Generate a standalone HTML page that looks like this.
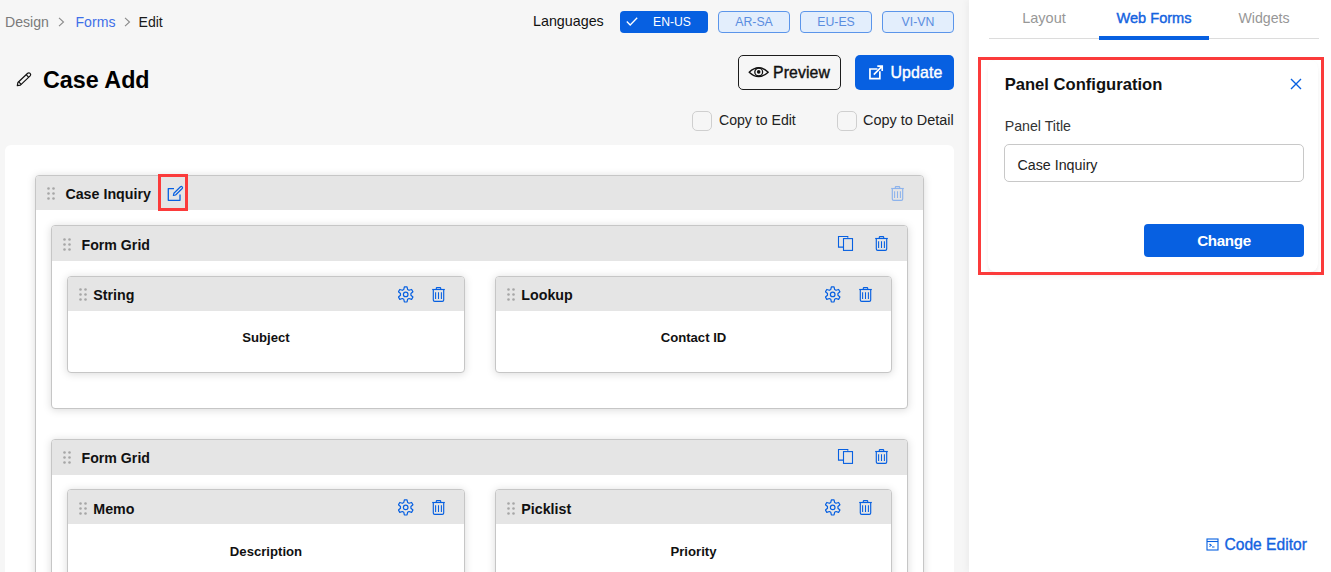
<!DOCTYPE html>
<html><head><meta charset="utf-8">
<style>
*{box-sizing:border-box;margin:0;padding:0}
html,body{width:1331px;height:572px;overflow:hidden;background:#f6f6f6;font-family:"Liberation Sans",sans-serif;color:#1a1a1a}
.a{position:absolute}
.t{position:absolute;white-space:nowrap;line-height:1}
.b{font-weight:bold}
.card{position:absolute;background:#fff;border-radius:6px}
.pnl{position:absolute;background:#fff;border:1px solid #c6c6c6;border-radius:4px;box-shadow:0 1px 8px rgba(0,0,0,.15);overflow:hidden}
.hdr{position:absolute;left:0;top:0;right:0;background:#e5e5e5}
.chip{position:absolute;top:11px;height:22px;border:1.5px solid #5b95ea;background:#e3eefc;border-radius:4px;color:#5a8de0;font-size:12.3px;text-align:center;line-height:20px}
</style></head>
<body>
<svg width="0" height="0" style="position:absolute">
<defs>
<symbol id="dots" viewBox="0 0 8 13"><circle cx="1.5" cy="1.5" r="1.3"/><circle cx="6.5" cy="1.5" r="1.3"/><circle cx="1.5" cy="6.5" r="1.3"/><circle cx="6.5" cy="6.5" r="1.3"/><circle cx="1.5" cy="11.5" r="1.3"/><circle cx="6.5" cy="11.5" r="1.3"/></symbol>
<symbol id="trash" viewBox="0 0 13 15"><g fill="none" stroke="currentColor" stroke-width="1.15" stroke-linejoin="round"><path d="M0.2 2.5 H12.8"/><path d="M4.3 2.3 V1.3 Q4.3 0.6 5 0.6 H8 Q8.7 0.6 8.7 1.3 V2.3"/><path d="M1.3 2.5 V13 Q1.3 14.4 2.7 14.4 H10.3 Q11.7 14.4 11.7 13 V2.5"/><path d="M3.6 5.2 V11.9 M6.5 5.2 V11.9 M9.4 5.2 V11.9" stroke-width="1.05"/></g></symbol>
<symbol id="gear" viewBox="0 0 16 17"><g fill="none" stroke="currentColor" stroke-width="1.2" stroke-linejoin="round"><path d="M5.80 3.45 L6.36 0.82 L9.04 0.82 L9.60 3.45 L11.04 4.28 L13.60 3.45 L14.94 5.77 L12.93 7.57 L12.93 9.23 L14.94 11.03 L13.60 13.35 L11.04 12.52 L9.60 13.35 L9.04 15.98 L6.36 15.98 L5.80 13.35 L4.36 12.52 L1.80 13.35 L0.46 11.03 L2.47 9.23 L2.47 7.57 L0.46 5.77 L1.80 3.45 L4.36 4.28 Z"/><circle cx="7.7" cy="8.4" r="2.3"/></g></symbol>
<symbol id="copy" viewBox="0 0 17 17"><g fill="none" stroke="currentColor" stroke-width="1.1"><path d="M10.8 2.7 V1.5 H1.5 V12.1 H6"/><rect x="6.5" y="3.6" width="9" height="11.8"/></g></symbol>
</defs></svg>
<div class="t" style="left:5px;top:15px;font-size:14.1px;color:#7a7a7a;">Design</div>
<svg class="a" style="left:58px;top:17px" width="7" height="10" viewBox="0 0 7 10"><path d="M1 0.8 L5.5 5 L1 9.2" fill="none" stroke="#8a8a8a" stroke-width="1.1"/></svg>
<div class="t" style="left:75.5px;top:15px;font-size:14.1px;color:#3f6fe8;">Forms</div>
<svg class="a" style="left:124px;top:17px" width="7" height="10" viewBox="0 0 7 10"><path d="M1 0.8 L5.5 5 L1 9.2" fill="none" stroke="#8a8a8a" stroke-width="1.1"/></svg>
<div class="t" style="left:138.5px;top:15px;font-size:14.1px;color:#1a1a1a;">Edit</div>
<svg class="a" style="left:12px;top:66px" width="24" height="26" viewBox="0 0 24 26"><g fill="none" stroke="#111" stroke-width="1.2" stroke-linejoin="round"><path d="M5.3 19.6 L5.9 16.5 L15.66 7.3 A1.8 1.8 0 0 1 18.14 9.9 L8.4 19.1 Z"/><path d="M14.2 8.7 L16.7 11.3 M6.6 15.7 L9.1 18.3"/></g></svg>
<div class="t b" style="left:43px;top:69px;font-size:23.3px;color:#000;">Case Add</div>
<div class="t" style="left:533px;top:14px;font-size:14.3px;color:#111;">Languages</div>
<div class="a" style="left:620px;top:11px;width:88px;height:22px;background:#0760e1;border-radius:4px"></div>
<svg class="a" style="left:626px;top:17px" width="12" height="9" viewBox="0 0 12 9"><path d="M0.8 4.5 L4.2 8 L11.2 0.8" fill="none" stroke="#fff" stroke-width="1.3"/></svg>
<div class="t" style="left:653px;top:16px;font-size:12.2px;color:#fff;">EN-US</div>
<div class="chip" style="left:718px;width:72px">AR-SA</div>
<div class="chip" style="left:800px;width:72px">EU-ES</div>
<div class="chip" style="left:882px;width:72px">VI-VN</div>
<div class="a" style="left:738px;top:55px;width:103px;height:35px;border:1.5px solid #1c1c1c;border-radius:5px"></div>
<svg class="a" style="left:748px;top:66px" width="22" height="12" viewBox="0 0 22 12"><path d="M1.2 6.2 Q10.7 -2.6 20.2 6.2 Q10.7 15 1.2 6.2 Z" fill="none" stroke="#111" stroke-width="1.4" stroke-linejoin="round"/><circle cx="10.7" cy="6.1" r="3.9" fill="none" stroke="#111" stroke-width="1.3"/><circle cx="10.7" cy="5.9" r="1.8" fill="#111"/></svg>
<div class="t" style="left:773px;top:65px;font-size:15.8px;color:#111;-webkit-text-stroke:0.4px #111;letter-spacing:0.1px">Preview</div>
<div class="a" style="left:855px;top:55px;width:99px;height:35px;background:#0760e1;border-radius:5px"></div>
<svg class="a" style="left:862px;top:60px" width="30" height="24" viewBox="0 0 30 24"><g fill="none" stroke="#fff" stroke-width="1.7"><path d="M15.5 9 H7.95 V18.65 H17.85 V11.3"/><path d="M11.8 14.6 L20.2 6.2 M15.3 6.2 H20.2 V11.1"/></g></svg>
<div class="t" style="left:890.5px;top:65px;font-size:15.9px;color:#fff;-webkit-text-stroke:0.4px #fff;letter-spacing:0.1px">Update</div>
<div class="a" style="left:692px;top:111px;width:20px;height:20px;border:1.5px solid #cfcfcf;border-radius:5px"></div>
<div class="t" style="left:719px;top:113px;font-size:14.1px;color:#222;">Copy to Edit</div>
<div class="a" style="left:837px;top:111px;width:20px;height:20px;border:1.5px solid #cfcfcf;border-radius:5px"></div>
<div class="t" style="left:863px;top:113px;font-size:14.45px;color:#222;">Copy to Detail</div>
<div class="card" style="left:5px;top:145px;width:949px;height:500px"></div>
<div class="pnl" style="left:35px;top:175px;width:889px;height:600px"><div class="hdr" style="height:34px"></div></div>
<svg class="a" style="left:47px;top:187px;fill:#a6a6a6" width="8" height="13"><use href="#dots"/></svg>
<div class="t b" style="left:65.4px;top:187px;font-size:14.25px;color:#111;">Case Inquiry</div>
<div class="a" style="left:158px;top:174px;width:30px;height:37px;border:3px solid #fb3b3b"></div>
<svg class="a" style="left:167px;top:185px;color:#0760e1" width="17" height="17" viewBox="0 0 17 17"><g fill="none" stroke="currentColor" stroke-width="1.3" stroke-linejoin="round"><path d="M7 3.6 H1.3 V15.3 H13 V9.5"/><path d="M6.4 10.4 L6.9 8.3 L13.5 1.8 Q14.4 1 15.2 1.8 Q16 2.6 15.2 3.5 L8.6 10 Z" stroke-width="1.2"/></g></svg>
<svg class="a" style="left:891px;top:186px;color:#8db3ec" width="13" height="15"><use href="#trash"/></svg>
<div class="pnl" style="left:51px;top:225px;width:857px;height:184px"><div class="hdr" style="height:35px"></div></div>
<svg class="a" style="left:63px;top:238px;fill:#a6a6a6" width="8" height="13"><use href="#dots"/></svg>
<div class="t b" style="left:81.6px;top:238px;font-size:14.15px;color:#111;">Form Grid</div>
<svg class="a" style="left:837px;top:235px;color:#0760e1" width="17" height="17"><use href="#copy"/></svg>
<svg class="a" style="left:875px;top:236px;color:#0760e1" width="13" height="15"><use href="#trash"/></svg>
<div class="pnl" style="left:67px;top:276px;width:398px;height:97px"><div class="hdr" style="height:34px"></div></div>
<svg class="a" style="left:79px;top:288px;fill:#a6a6a6" width="8" height="13"><use href="#dots"/></svg>
<div class="t b" style="left:93.3px;top:288px;font-size:14.25px;color:#111;">String</div>
<svg class="a" style="left:398px;top:286px;color:#0760e1" width="16" height="17"><use href="#gear"/></svg>
<svg class="a" style="left:432px;top:287px;color:#0760e1" width="13" height="15"><use href="#trash"/></svg>
<div class="t b" style="left:116.0px;width:300px;text-align:center;top:331px;font-size:13.15px;color:#111;">Subject</div>
<div class="pnl" style="left:495px;top:276px;width:397px;height:97px"><div class="hdr" style="height:34px"></div></div>
<svg class="a" style="left:507px;top:288px;fill:#a6a6a6" width="8" height="13"><use href="#dots"/></svg>
<div class="t b" style="left:521.3px;top:288px;font-size:14.25px;color:#111;">Lookup</div>
<svg class="a" style="left:825px;top:286px;color:#0760e1" width="16" height="17"><use href="#gear"/></svg>
<svg class="a" style="left:859px;top:287px;color:#0760e1" width="13" height="15"><use href="#trash"/></svg>
<div class="t b" style="left:543.5px;width:300px;text-align:center;top:331px;font-size:13.15px;color:#111;">Contact ID</div>
<div class="pnl" style="left:51px;top:439px;width:857px;height:300px"><div class="hdr" style="height:35px"></div></div>
<svg class="a" style="left:63px;top:451px;fill:#a6a6a6" width="8" height="13"><use href="#dots"/></svg>
<div class="t b" style="left:81.6px;top:451px;font-size:14.15px;color:#111;">Form Grid</div>
<svg class="a" style="left:837px;top:448px;color:#0760e1" width="17" height="17"><use href="#copy"/></svg>
<svg class="a" style="left:875px;top:449px;color:#0760e1" width="13" height="15"><use href="#trash"/></svg>
<div class="pnl" style="left:67px;top:489px;width:398px;height:200px"><div class="hdr" style="height:34px"></div></div>
<svg class="a" style="left:79px;top:502px;fill:#a6a6a6" width="8" height="13"><use href="#dots"/></svg>
<div class="t b" style="left:93.3px;top:502px;font-size:14.25px;color:#111;">Memo</div>
<svg class="a" style="left:398px;top:499px;color:#0760e1" width="16" height="17"><use href="#gear"/></svg>
<svg class="a" style="left:432px;top:500px;color:#0760e1" width="13" height="15"><use href="#trash"/></svg>
<div class="t b" style="left:116.0px;width:300px;text-align:center;top:545px;font-size:13.15px;color:#111;">Description</div>
<div class="pnl" style="left:495px;top:489px;width:397px;height:200px"><div class="hdr" style="height:34px"></div></div>
<svg class="a" style="left:507px;top:502px;fill:#a6a6a6" width="8" height="13"><use href="#dots"/></svg>
<div class="t b" style="left:521.3px;top:502px;font-size:14.25px;color:#111;">Picklist</div>
<svg class="a" style="left:825px;top:499px;color:#0760e1" width="16" height="17"><use href="#gear"/></svg>
<svg class="a" style="left:859px;top:500px;color:#0760e1" width="13" height="15"><use href="#trash"/></svg>
<div class="t b" style="left:543.5px;width:300px;text-align:center;top:545px;font-size:13.15px;color:#111;">Priority</div>
<div class="a" style="left:969px;top:0;width:362px;height:572px;background:#fff;box-shadow:-3px 0 6px rgba(0,0,0,.035)"></div>
<div class="a" style="left:989px;top:38px;width:330px;height:1px;background:#dcdcdc"></div>
<div class="a" style="left:1099px;top:36px;width:110px;height:4px;background:#0760e1"></div>
<div class="t" style="left:989.0px;width:110px;text-align:center;top:11px;font-size:14.5px;color:#979797;">Layout</div>
<div class="t" style="left:1099.0px;width:110px;text-align:center;top:11px;font-size:14.6px;color:#1463e0;-webkit-text-stroke:0.4px #1463e0">Web Forms</div>
<div class="t" style="left:1209.0px;width:110px;text-align:center;top:11px;font-size:14.2px;color:#979797;">Widgets</div>
<div class="a" style="left:988px;top:60px;width:330px;height:212px;background:#fff;border-radius:8px;box-shadow:0 4px 7px -3px rgba(0,0,0,.16),0 0 1px rgba(0,0,0,.03)"></div>
<div class="a" style="left:978px;top:57px;width:346px;height:218px;border:3px solid #fb3b3b"></div>
<div class="t b" style="left:1004.7px;top:77px;font-size:16.6px;color:#111;">Panel Configuration</div>
<svg class="a" style="left:1290px;top:78px" width="12" height="12" viewBox="0 0 12 12"><path d="M1 1 L11 11 M11 1 L1 11" stroke="#0760e1" stroke-width="1.4"/></svg>
<div class="t" style="left:1004.7px;top:119px;font-size:14.2px;color:#333;">Panel Title</div>
<div class="a" style="left:1004px;top:144px;width:300px;height:38px;border:1px solid #c8c8c8;border-radius:5px"></div>
<div class="t" style="left:1017.5px;top:158px;font-size:14.25px;color:#222;">Case Inquiry</div>
<div class="a" style="left:1144px;top:224px;width:160px;height:33px;background:#0760e1;border-radius:4px"></div>
<div class="t b" style="left:1144.0px;width:160px;text-align:center;top:233px;font-size:15.2px;color:#fff;letter-spacing:-0.35px">Change</div>
<svg class="a" style="left:1206px;top:538px" width="13" height="13" viewBox="0 0 13 13"><g fill="none" stroke="#0760e1" stroke-width="1.1"><rect x="1" y="1" width="11" height="11"/><path d="M1 3.5 H12"/><path d="M3.5 6 L5.2 7.3 L3.5 8.6 M6 9 H8.5"/></g></svg>
<div class="t" style="left:1224.5px;top:537px;font-size:15.6px;color:#1463e0;-webkit-text-stroke:0.35px #1463e0">Code Editor</div>
</body></html>
